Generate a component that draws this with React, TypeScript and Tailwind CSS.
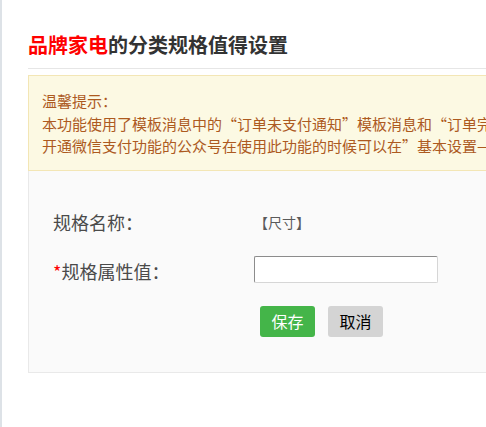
export default function App() {
  const font = { fontFamily: '"Noto Sans CJK SC", "Noto Sans", sans-serif' };

  return (
    <div className="flex min-h-[427px] w-full overflow-hidden bg-white" style={font}>
      <div className="w-[2px] shrink-0 bg-[#dde2e7]" />
      <div className="min-w-0 flex-1 overflow-hidden pl-[26px]">
        <h2 className="mt-[31px] h-[28px] whitespace-nowrap text-[20px] font-bold leading-[28px] text-[#333]">
          <span className="text-[#ff0000]">品牌家电</span>的分类规格值得设置
        </h2>
        <div className="mt-[9px] w-[600px] border-b border-[#e6e6e6]" />

        <div className="mt-[6px] w-[700px] border border-[#f3e6b5] bg-[#fcf9e3] pb-[12px] pl-[13px] pt-[14px] text-[15px] leading-[22.5px] whitespace-nowrap text-[#ad5a1f]">
          <p>温馨提示：</p>
          <p>本功能使用了模板消息中的“订单未支付通知”模板消息和“订单完成通知”模板消息</p>
          <p>开通微信支付功能的公众号在使用此功能的时候可以在”基本设置—模板消息”中设置</p>
        </div>

        <div className="w-[700px] border border-t-0 border-[#e9e9e9] bg-[#fafafa] pb-[35px] pl-[24px] pt-[32px]">
          <div className="flex h-[40px] items-center">
            <span className="w-[201px] text-[18px] text-[#4a4a4a]">规格名称：</span>
            <span className="text-[14px] text-[#5a5a5a]">【尺寸】</span>
          </div>
          <div className="mt-[9px] flex h-[40px] items-center">
            <span className="w-[201px] text-[18px] text-[#4a4a4a]">
              <span className="text-[#ff0000]">*</span>规格属性值：
            </span>
            <input
              type="text"
              className="mb-[4px] h-[27px] w-[184px] rounded-[2px] border border-[#d6d6d6] border-l-[#8c8c8c] border-t-[#8c8c8c] bg-white px-2 text-[14px] outline-none"
            />
          </div>
          <div className="mt-[14px] flex gap-[13px] pl-[207px]">
            <button className="h-[31px] w-[55px] rounded-[3px] bg-[#44b549] text-[16px] text-white">
              保存
            </button>
            <button className="h-[31px] w-[55px] rounded-[3px] bg-[#d4d4d4] text-[16px] text-black">
              取消
            </button>
          </div>
        </div>
      </div>
    </div>
  );
}
